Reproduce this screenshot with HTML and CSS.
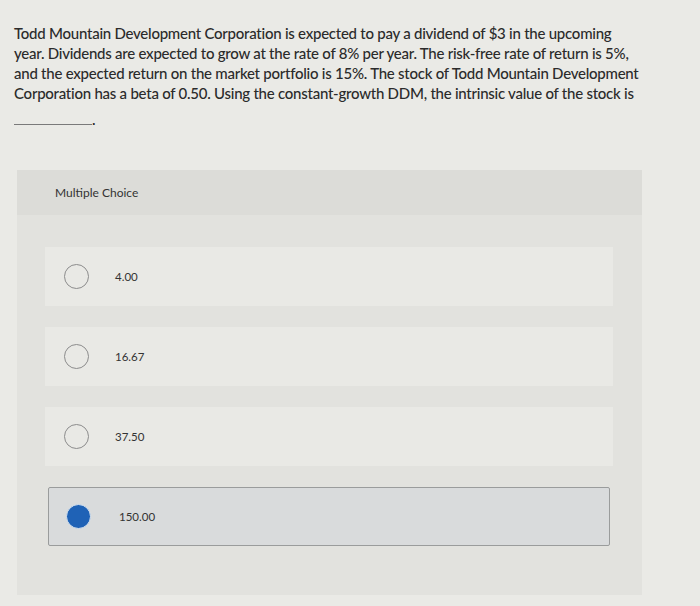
FILE: index.html
```html
<!DOCTYPE html>
<html lang="en">
<head>
  <meta charset="UTF-8">
  <meta name="viewport" content="width=device-width, initial-scale=1">
  <title>Multiple Choice</title>
  <link rel="stylesheet" href="styles.css">
</head>
<body>
  <!-- Question -->
  <div class="question">
    <p>Todd Mountain Development Corporation is expected to pay a dividend of $3 in the upcoming<br>
    year. Dividends are expected to grow at the rate of 8% per year. The risk-free rate of return is 5%,<br>
    and the expected return on the market portfolio is 15%. The stock of Todd Mountain Development<br>
    Corporation has a beta of 0.50. Using the constant-growth DDM, the intrinsic value of the stock is</p>
    <p class="blank-line"><span class="blank"></span>.</p>
  </div>

  <!-- Answer panel -->
  <div class="panel">
    <div class="panel-head">Multiple Choice</div>
    <div class="options">
      <div class="option">
        <span class="radio"></span>
        <span class="label">4.00</span>
      </div>
      <div class="option">
        <span class="radio"></span>
        <span class="label">16.67</span>
      </div>
      <div class="option">
        <span class="radio"></span>
        <span class="label">37.50</span>
      </div>
      <div class="option selected">
        <span class="radio"></span>
        <span class="label">150.00</span>
      </div>
    </div>
  </div>
</body>
</html>
```

FILE: styles.css
```css
* {
  margin: 0;
  padding: 0;
  box-sizing: border-box;
}

body {
  font-family: Lato, 'Open Sans', sans-serif;
  background-color: #eaeae6;
  color: #2b2b2b;
  height: 606px;
  overflow: hidden;
}

/* Question text */
.question {
  padding: 23px 0 0 14px;
  width: 690px;
  font-size: 15px;
  letter-spacing: -0.25px;
  line-height: 20px;
  font-weight: 500;
  white-space: nowrap;
}

.blank-line {
  margin-top: 6px;
  height: 20px;
}

.blank {
  display: inline-block;
  width: 78px;
  border-bottom: 1.5px solid #7a7a7a;
}

/* Panel */
.panel {
  margin: 41px 0 0 17px;
  width: 625px;
  height: 425px;
  background-color: #e2e2de;
}

.panel-head {
  height: 45px;
  line-height: 45px;
  padding-left: 38px;
  font-size: 12px;
  color: #333;
  background-color: #dcdcd8;
}

.options {
  display: flex;
  flex-direction: column;
  gap: 21px;
  padding: 32px 29px 0 28px;
}

.option {
  display: flex;
  align-items: center;
  height: 59px;
  padding-left: 19px;
  background-color: #e9e9e5;
}

.radio {
  width: 25px;
  height: 25px;
  border-radius: 50%;
  border: 1.5px solid #8c8c8c;
  margin-right: 26px;
  flex-shrink: 0;
}

.label {
  font-size: 11.5px;
  color: #333;
}

/* Selected answer */
.option.selected {
  margin: 0 3px;
  padding-left: 17px;
  background-color: #d9dbdc;
  border: 1px solid #9a9c9c;
  border-radius: 2px;
}

.option.selected .radio {
  border: 1px solid #d6e2ef;
  background-color: #1f62b6;
  margin-right: 28px;
}
```
